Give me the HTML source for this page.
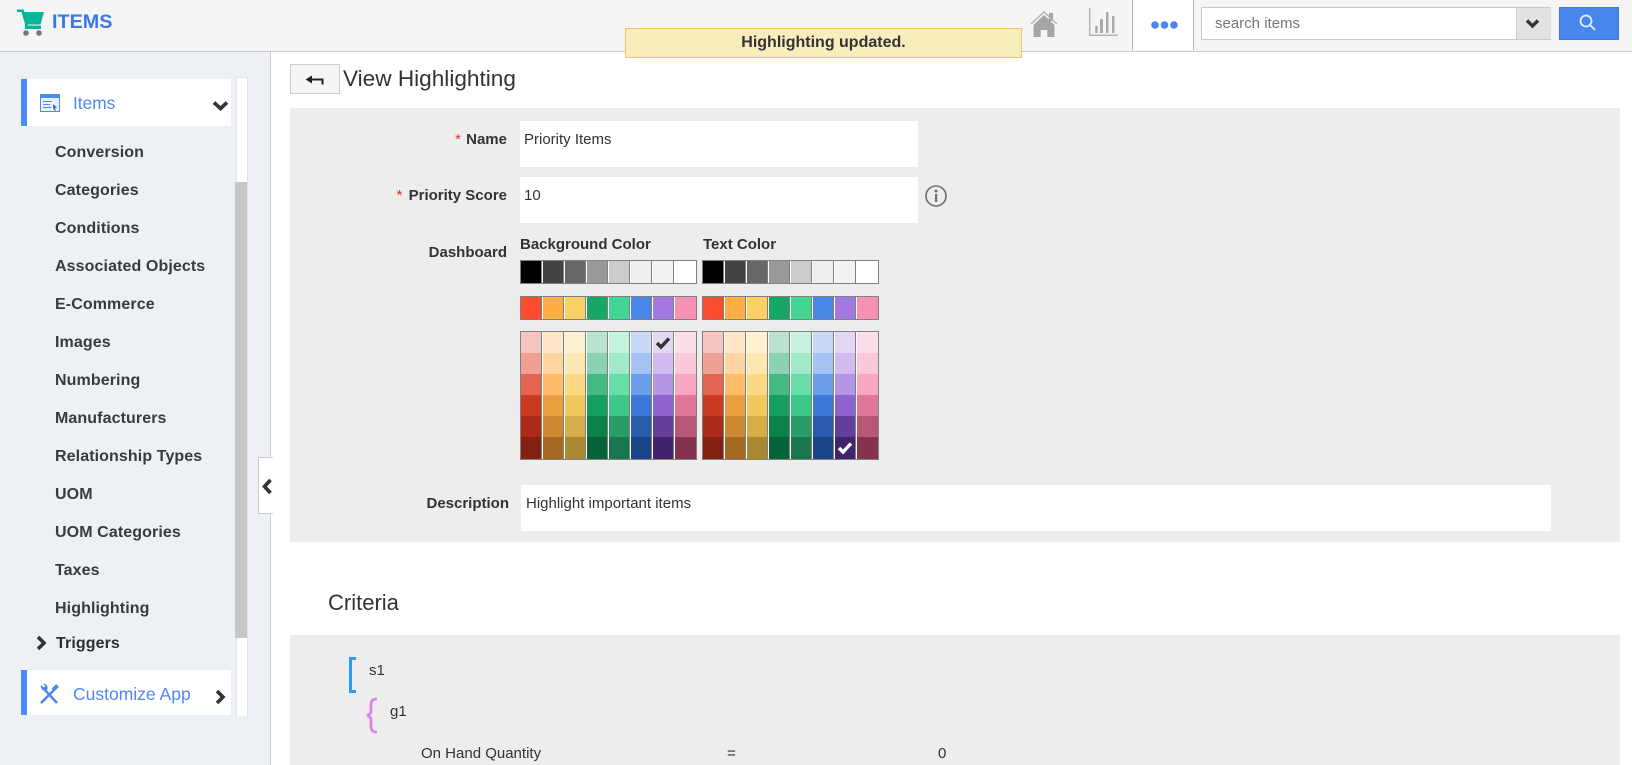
<!DOCTYPE html>
<html><head><meta charset="utf-8"><title>View Highlighting</title>
<style>
html,body{margin:0;padding:0;width:1632px;height:765px;overflow:hidden;background:#fff;font-family:"Liberation Sans",sans-serif;color:#333}
.a{position:absolute;white-space:nowrap}
.side{font-size:16px;font-weight:bold;left:55px;color:#3a3a3a;line-height:20px;letter-spacing:.1px}
.lb{font-size:15px;font-weight:bold;line-height:18px;text-align:right;color:#333}
.t{font-size:15px;line-height:18px;color:#333}
.inp{position:absolute;background:#fff}
</style></head><body>
<svg width="0" height="0" style="position:absolute"><defs>
<symbol id="pal" viewBox="0 0 178 200">
<g id="cells">
<rect x="0" y="0" width="177" height="24" fill="#808080"/>
<rect x="1" y="1" width="20" height="22" fill="#000"/><rect x="23" y="1" width="20" height="22" fill="#434343"/><rect x="45" y="1" width="20" height="22" fill="#666"/><rect x="67" y="1" width="20" height="22" fill="#999"/><rect x="89" y="1" width="20" height="22" fill="#ccc"/><rect x="111" y="1" width="20" height="22" fill="#efefef"/><rect x="133" y="1" width="20" height="22" fill="#f3f3f3"/><rect x="155" y="1" width="21" height="22" fill="#fff"/>
<rect x="0" y="36" width="177" height="24" fill="#808080"/>
<rect x="1" y="37" width="20" height="22" fill="#fb4c2f"/><rect x="23" y="37" width="20" height="22" fill="#ffad47"/><rect x="45" y="37" width="20" height="22" fill="#fad165"/><rect x="67" y="37" width="20" height="22" fill="#16a766"/><rect x="89" y="37" width="20" height="22" fill="#43d692"/><rect x="111" y="37" width="20" height="22" fill="#4a86e8"/><rect x="133" y="37" width="20" height="22" fill="#a479e2"/><rect x="155" y="37" width="21" height="22" fill="#f691b3"/>
<rect x="0" y="71" width="177" height="129" fill="#808080"/>
<g transform="translate(1,72)">
<rect x="0" y="0" width="20" height="21" fill="#f6c5be"/><rect x="22" y="0" width="20" height="21" fill="#ffe6c7"/><rect x="44" y="0" width="20" height="21" fill="#fef1d1"/><rect x="66" y="0" width="20" height="21" fill="#b9e4d0"/><rect x="88" y="0" width="20" height="21" fill="#c6f3de"/><rect x="110" y="0" width="20" height="21" fill="#c9daf8"/><rect x="132" y="0" width="20" height="21" fill="#e4d7f5"/><rect x="154" y="0" width="21" height="21" fill="#fcdee8"/>
<rect x="0" y="21" width="20" height="21" fill="#efa093"/><rect x="22" y="21" width="20" height="21" fill="#ffd6a2"/><rect x="44" y="21" width="20" height="21" fill="#fce8b3"/><rect x="66" y="21" width="20" height="21" fill="#89d3b2"/><rect x="88" y="21" width="20" height="21" fill="#a0eac9"/><rect x="110" y="21" width="20" height="21" fill="#a4c2f4"/><rect x="132" y="21" width="20" height="21" fill="#d0bcf1"/><rect x="154" y="21" width="21" height="21" fill="#fbc8d9"/>
<rect x="0" y="42" width="20" height="21" fill="#e66550"/><rect x="22" y="42" width="20" height="21" fill="#ffbc6b"/><rect x="44" y="42" width="20" height="21" fill="#fcda83"/><rect x="66" y="42" width="20" height="21" fill="#44b984"/><rect x="88" y="42" width="20" height="21" fill="#68dfa9"/><rect x="110" y="42" width="20" height="21" fill="#6d9eeb"/><rect x="132" y="42" width="20" height="21" fill="#b694e8"/><rect x="154" y="42" width="21" height="21" fill="#f7a7c0"/>
<rect x="0" y="63" width="20" height="21" fill="#cc3a21"/><rect x="22" y="63" width="20" height="21" fill="#eaa041"/><rect x="44" y="63" width="20" height="21" fill="#f2c960"/><rect x="66" y="63" width="20" height="21" fill="#149e60"/><rect x="88" y="63" width="20" height="21" fill="#3dc789"/><rect x="110" y="63" width="20" height="21" fill="#3c78d8"/><rect x="132" y="63" width="20" height="21" fill="#8e63ce"/><rect x="154" y="63" width="21" height="21" fill="#e07798"/>
<rect x="0" y="84" width="20" height="21" fill="#ac2b16"/><rect x="22" y="84" width="20" height="21" fill="#cf8933"/><rect x="44" y="84" width="20" height="21" fill="#d5ae49"/><rect x="66" y="84" width="20" height="21" fill="#0b804b"/><rect x="88" y="84" width="20" height="21" fill="#2a9c68"/><rect x="110" y="84" width="20" height="21" fill="#285bac"/><rect x="132" y="84" width="20" height="21" fill="#653e9b"/><rect x="154" y="84" width="21" height="21" fill="#b65775"/>
<rect x="0" y="105" width="20" height="22" fill="#822111"/><rect x="22" y="105" width="20" height="22" fill="#a46a21"/><rect x="44" y="105" width="20" height="22" fill="#aa8831"/><rect x="66" y="105" width="20" height="22" fill="#076239"/><rect x="88" y="105" width="20" height="22" fill="#1a764d"/><rect x="110" y="105" width="20" height="22" fill="#1c4587"/><rect x="132" y="105" width="20" height="22" fill="#41236d"/><rect x="154" y="105" width="21" height="22" fill="#83334c"/>
</g>
</g>
<g fill="#fff">
<rect x="22" y="1" width="1" height="22"/><rect x="44" y="1" width="1" height="22"/><rect x="66" y="1" width="1" height="22"/><rect x="88" y="1" width="1" height="22"/><rect x="110" y="1" width="1" height="22"/><rect x="132" y="1" width="1" height="22"/><rect x="154" y="1" width="1" height="22"/>
<rect x="22" y="37" width="1" height="22"/><rect x="44" y="37" width="1" height="22"/><rect x="66" y="37" width="1" height="22"/><rect x="88" y="37" width="1" height="22"/><rect x="110" y="37" width="1" height="22"/><rect x="132" y="37" width="1" height="22"/><rect x="154" y="37" width="1" height="22"/>
<rect x="22" y="72" width="1" height="127"/><rect x="44" y="72" width="1" height="127"/><rect x="66" y="72" width="1" height="127"/><rect x="88" y="72" width="1" height="127"/><rect x="110" y="72" width="1" height="127"/><rect x="132" y="72" width="1" height="127"/><rect x="154" y="72" width="1" height="127"/>
</g>
</symbol>
</defs></svg>

<!-- header -->
<div class="a" style="left:0;top:0;width:1632px;height:51px;background:#f5f5f5;border-bottom:1px solid #ccc"></div>
<svg class="a" style="left:17px;top:9px" width="29" height="28" viewBox="0 0 29 28">
<path d="M0 .5H6.500L7.500 3H27L23.500 15.500H10.800L11 16.500H24V20H7.800L8 15L4.500 3H0Z" fill="#00b796"/>
<circle cx="9" cy="24" r="2.800" fill="#777"/><circle cx="22" cy="24" r="2.800" fill="#777"/></svg>
<div class="a" style="left:52px;top:11px;font-size:19.800px;font-weight:bold;line-height:23px;color:#3b78e7">ITEMS</div>

<svg class="a" style="left:1030px;top:10px" width="28" height="29" viewBox="0 0 28 29">
<rect x="19" y="3" width="4" height="8" fill="#a6a6a6"/>
<path d="M1 14L14 2L27 14" fill="none" stroke="#b5b5b5" stroke-width="1.500"/>
<path d="M3.500 15L14 5L24.500 15V27H17.300V20H10.700V27H3.500Z" fill="#a6a6a6"/></svg>
<svg class="a" style="left:1088px;top:8px" width="31" height="30" viewBox="0 0 31 30">
<path d="M1.700 0V27.300H30" fill="none" stroke="#b5b5b5" stroke-width="1.500"/>
<rect x="7.200" y="18" width="2.500" height="7" fill="#aaa"/><rect x="12" y="11" width="3" height="14" fill="#aaa"/><rect x="18" y="4" width="2.500" height="21" fill="#aaa"/><rect x="24" y="8" width="2.500" height="17" fill="#aaa"/></svg>
<div class="a" style="left:1132px;top:0;width:60px;height:50px;background:#fff;border-left:1px solid #b5b5b5;border-right:1px solid #b5b5b5"></div>
<svg class="a" style="left:1149px;top:19px" width="30" height="12"><circle cx="6" cy="6" r="3.800" fill="#4a86f0"/><circle cx="15.500" cy="6" r="3.800" fill="#4a86f0"/><circle cx="25" cy="6" r="3.800" fill="#4a86f0"/></svg>

<div class="a" style="left:1201px;top:7px;width:348px;height:31px;background:#fff;border:1px solid #c8c8c8"></div>
<div class="a" style="left:1516px;top:8px;width:34px;height:31px;background:#e2e2e2;border-left:1px solid #ccc"></div>
<div class="a" style="left:1215px;top:15px;font-size:15px;line-height:18px;color:#777">search items</div>
<svg class="a" style="left:1525px;top:18px" width="15" height="12" viewBox="0 0 15 12"><path d="M2 2.500L7.500 8L13 2.500" fill="none" stroke="#333" stroke-width="3.400"/></svg>
<div class="a" style="left:1559px;top:7px;width:58px;height:31px;background:#4787ed;border:1px solid #3b78e7"></div>
<svg class="a" style="left:1578px;top:13px" width="20" height="20" viewBox="0 0 20 20"><circle cx="8" cy="8" r="5.500" fill="none" stroke="#e6efff" stroke-width="1.800"/><path d="M12 12L17 17" stroke="#e6efff" stroke-width="1.800"/></svg>

<!-- sidebar -->
<div class="a" style="left:0;top:52px;width:270px;height:713px;background:#edf0f5;border-right:1px solid #ccc"></div>
<div class="a" style="left:236px;top:77px;width:10px;height:638px;background:#fff;border:1px solid #e2e4e8;border-bottom:none"></div>
<div class="a" style="left:235px;top:182px;width:12px;height:456px;background:#c6c6c6"></div>
<div class="a" style="left:21px;top:79px;width:210px;height:47px;background:#fff;border-left:6px solid #4a8cff;box-sizing:border-box"></div>
<svg class="a" style="left:40px;top:94px" width="21" height="18" viewBox="0 0 21 18"><rect x=".5" y=".5" width="19" height="17" fill="#e9f0ff" stroke="#4a8cf0"/><rect x="0" y="0" width="20" height="4" fill="#4a8cf0"/><path d="M3 7.500H12M3 10.500H10M3 13.500H11" stroke="#4a8cf0" stroke-width="1"/><path d="M13 10L17 13.500L15 14L16 16.500H14.500L14 14.500L13 15.500Z" fill="#4a6cb0"/></svg>
<div class="a" style="left:73px;top:93px;font-size:17.300px;line-height:20px;color:#4f87f5">Items</div>
<svg class="a" style="left:212px;top:100px" width="17" height="12" viewBox="0 0 17 12"><path d="M2 2.500L8.500 8.500L15 2.500" fill="none" stroke="#333" stroke-width="3.600"/></svg>

<div class="a side" style="top:143px">Conversion</div>
<div class="a side" style="top:181px">Categories</div>
<div class="a side" style="top:219px">Conditions</div>
<div class="a side" style="top:257px">Associated Objects</div>
<div class="a side" style="top:295px">E-Commerce</div>
<div class="a side" style="top:333px">Images</div>
<div class="a side" style="top:371px">Numbering</div>
<div class="a side" style="top:409px">Manufacturers</div>
<div class="a side" style="top:447px">Relationship Types</div>
<div class="a side" style="top:485px">UOM</div>
<div class="a side" style="top:523px">UOM Categories</div>
<div class="a side" style="top:561px">Taxes</div>
<div class="a side" style="top:599px">Highlighting</div>
<svg class="a" style="left:35px;top:635px" width="13" height="16" viewBox="0 0 13 16"><path d="M3 2L9 8L3 14" fill="none" stroke="#333" stroke-width="3.600"/></svg>
<div class="a side" style="top:634px;left:56px;color:#2f2f2f">Triggers</div>

<div class="a" style="left:21px;top:670px;width:210px;height:45px;background:#fff;border-left:6px solid #4a8cff;box-sizing:border-box"></div>
<svg class="a" style="left:39px;top:683px" width="21" height="21" viewBox="0 0 21 21"><path d="M2 20L15 7" stroke="#4a87f0" stroke-width="2.500"/><path d="M14 7L18.500 2.500" stroke="#4a87f0" stroke-width="4"/><path d="M18 20L6 7" stroke="#4a87f0" stroke-width="2.500"/><path d="M7 8C3.500 8 1 5 2 2L5 4.500L6.500 3L4 1C7 0 9 3 8.500 6Z" fill="#4a87f0"/></svg>
<div class="a" style="left:73px;top:684px;font-size:17.500px;line-height:20px;color:#4f87f5">Customize App</div>
<svg class="a" style="left:214px;top:689px" width="13" height="16" viewBox="0 0 13 16"><path d="M3 2L9 8L3 14" fill="none" stroke="#333" stroke-width="3.600"/></svg>

<div class="a" style="left:258px;top:457px;width:14px;height:55px;background:#fff;border:1px solid #ccc;border-right:none"></div>
<svg class="a" style="left:261px;top:478px" width="13" height="17" viewBox="0 0 13 17"><path d="M9.500 2L3.500 8.500L9.500 15" fill="none" stroke="#333" stroke-width="3.600"/></svg>

<!-- title -->
<div class="a" style="left:290px;top:64px;width:48px;height:28px;background:#f5f5f5;border:1px solid #ccc"></div>
<svg class="a" style="left:305px;top:74px" width="20" height="11" viewBox="0 0 20 11"><path d="M3 5.500H17.500V10.500" fill="none" stroke="#222" stroke-width="2"/><path d="M0.500 5.500L7 1.500V9.500Z" fill="#222"/></svg>
<div class="a" style="left:343px;top:65px;font-size:22.600px;line-height:27px;color:#333">View Highlighting</div>

<!-- form panel -->
<div class="a" style="left:290px;top:108px;width:1330px;height:434px;background:#ededed"></div>
<div class="inp" style="left:520px;top:121px;width:398px;height:46px"></div>
<div class="inp" style="left:520px;top:177px;width:398px;height:46px"></div>
<div class="inp" style="left:521px;top:485px;width:1030px;height:46px"></div>
<div class="a lb" style="right:1125px;top:131px"><span style="color:#d9362b;font-weight:normal;margin-right:1px">*</span>&nbsp;Name</div>
<div class="a lb" style="right:1125px;top:187px"><span style="color:#d9362b;font-weight:normal;margin-right:2px">*</span>&nbsp;Priority Score</div>
<div class="a lb" style="right:1125px;top:244px">Dashboard</div>
<div class="a lb" style="right:1123px;top:495px">Description</div>
<div class="a t" style="left:524px;top:131px">Priority Items</div>
<div class="a t" style="left:524px;top:187px">10</div>
<div class="a t" style="left:526px;top:495px">Highlight important items</div>
<svg class="a" style="left:924px;top:184px" width="24" height="24" viewBox="0 0 24 24"><circle cx="12" cy="12" r="10" fill="none" stroke="#707070" stroke-width="1.600"/><rect x="11" y="10" width="2.200" height="8" fill="#707070"/><circle cx="12" cy="7" r="1.500" fill="#707070"/></svg>
<div class="a lb" style="left:520px;top:236px;text-align:left">Background Color</div>
<div class="a lb" style="left:703px;top:236px;text-align:left">Text Color</div>
<svg class="a" style="left:520px;top:260px" width="178" height="200"><use href="#pal"/></svg>
<svg class="a" style="left:702px;top:260px" width="178" height="200"><use href="#pal"/></svg>
<svg class="a" style="left:655px;top:336px" width="16" height="14" viewBox="0 0 16 14"><path d="M2 7L6 11L14 2.500" fill="none" stroke="#333" stroke-width="3.400"/></svg>
<svg class="a" style="left:837px;top:441px" width="16" height="14" viewBox="0 0 16 14"><path d="M2 7L6 11L14 2.500" fill="none" stroke="#fff" stroke-width="3.400"/></svg>

<!-- criteria -->
<div class="a" style="left:328px;top:590px;font-size:22px;line-height:25px;color:#333">Criteria</div>
<div class="a" style="left:290px;top:635px;width:1330px;height:130px;background:#ededed"></div>
<svg class="a" style="left:348px;top:657px" width="10" height="36"><path d="M8 1.500H2.500V34.500H8" fill="none" stroke="#2d9cf5" stroke-width="3"/></svg>
<div class="a t" style="left:369px;top:662px">s1</div>
<svg class="a" style="left:364px;top:697px" width="16" height="37" viewBox="0 0 16 37"><path d="M13 2C8 2 7 4 7 8V14C7 17 5 18 3 18.500C5 19 7 20 7 23V29C7 33 8 35 13 35" fill="none" stroke="#d987e6" stroke-width="2.800"/></svg>
<div class="a t" style="left:390px;top:703px">g1</div>
<div class="a t" style="left:421px;top:745px">On Hand Quantity</div>
<div class="a t" style="left:727px;top:745px">=</div>
<div class="a t" style="left:938px;top:745px">0</div>

<!-- toast -->
<div class="a" style="left:625px;top:28px;width:395px;height:28px;background:#f9edbe;border:1px solid #f0c36d;text-align:center;font-size:16px;font-weight:bold;line-height:28px;color:#333">Highlighting updated.</div>
</body></html>
